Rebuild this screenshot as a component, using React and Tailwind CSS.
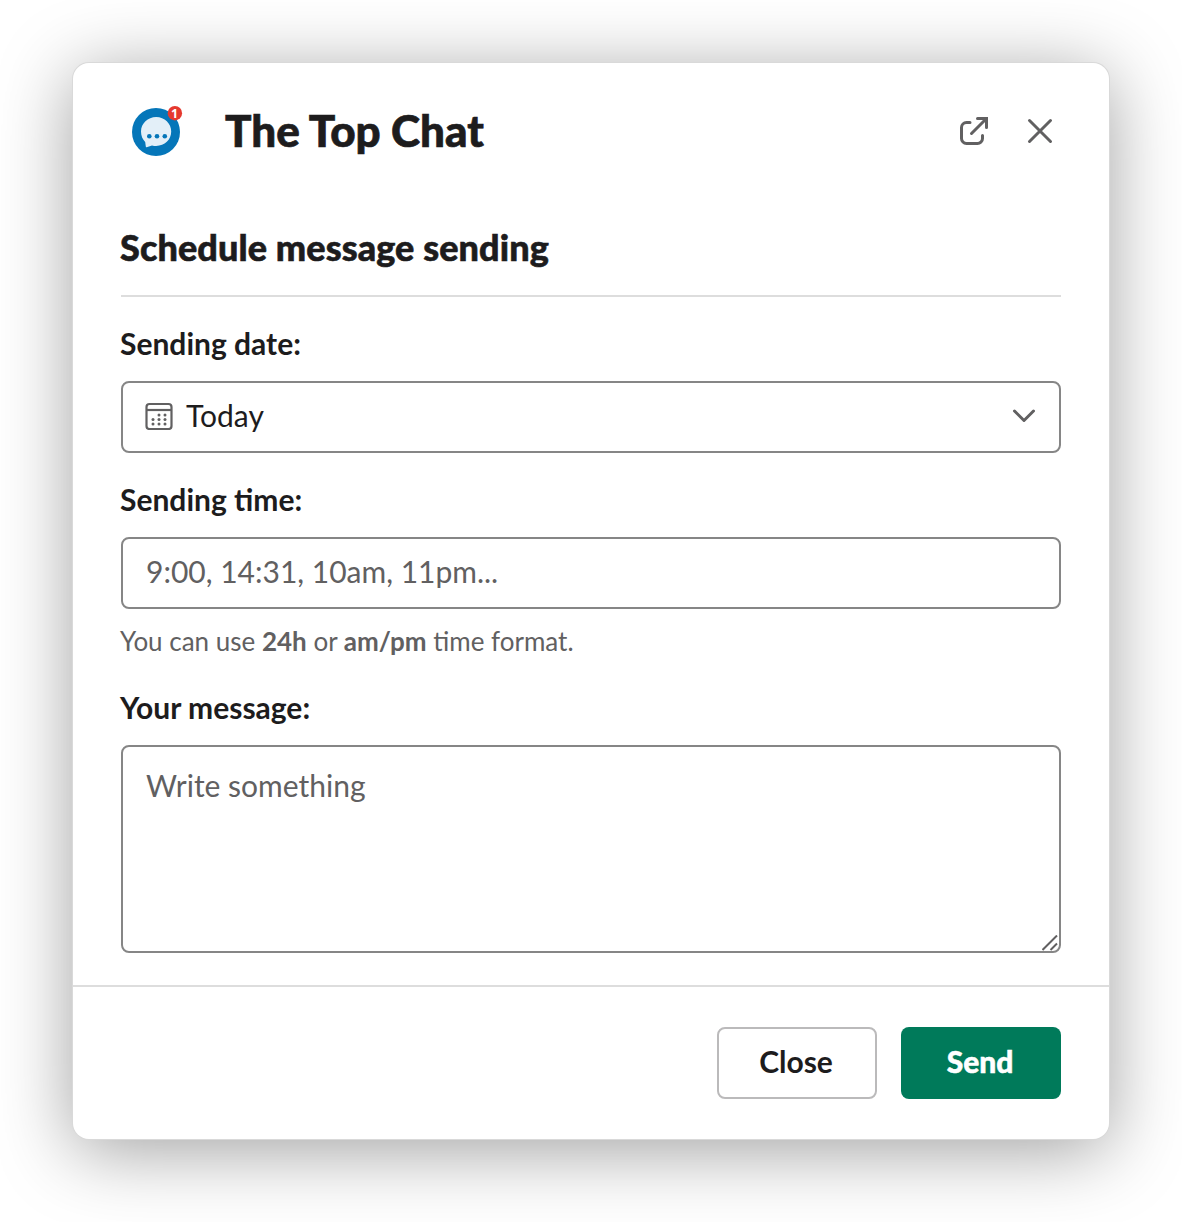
import React, { useState } from 'react';

const LogoIcon = () => (
  <svg width="52" height="52" viewBox="0 0 52 52" className="mb-0.5 shrink-0">
    <circle cx="25" cy="28" r="24" fill="#0576b9" />
    <path
      d="M25.2 13C33.6 13 40.2 19.4 40.2 27.6S33.6 42 25.2 42c-1.600 0-2.800-.2-4.200-.6l-5.300 1.800c-.6.1-.8-.1-.9-.6l-.6-4.600C11.600 35.600 10 31.800 10 27.600 10 19.400 16.800 13 25.200 13Z"
      fill="#e3eff8"
    />
    <circle cx="18.300" cy="32.200" r="2.300" fill="#0576b9" />
    <circle cx="26" cy="32.200" r="2.300" fill="#0576b9" />
    <circle cx="33.800" cy="32.200" r="2.300" fill="#0576b9" />
    <circle cx="43.900" cy="9.200" r="7.200" fill="#e5392f" />
    <text x="43.500" y="13.600" textAnchor="middle" fontFamily="Open Sans, sans-serif" fontSize="12.500" fontWeight="700" fill="#fff">1</text>
  </svg>
);

const OpenIcon = () => (
  <svg width="32" height="32" viewBox="0 0 32 32" fill="none" stroke="#616061" strokeWidth="3" strokeLinecap="round" strokeLinejoin="round">
    <path d="M12 7.500H8.500A5 5 0 0 0 3.500 12.500V23.500A5 5 0 0 0 8.500 28.500H19A5 5 0 0 0 24.500 23.500V20.500" />
    <path d="M13.500 18.500L27 5" />
    <path d="M19.500 3.500H28.500V12.500" strokeLinejoin="miter" />
  </svg>
);

const CloseIcon = () => (
  <svg width="28" height="28" viewBox="0 0 28 28" fill="none" stroke="#616061" strokeWidth="3" strokeLinecap="round">
    <path d="M3.500 3.500L24.500 24.500M24.500 3.500L3.500 24.500" />
  </svg>
);

const calendarDots = [
  [14, 13], [20, 13],
  [8, 17.500], [14, 17.500], [20, 17.500],
  [8, 22], [14, 22], [20, 22],
];

const CalendarIcon = () => (
  <svg width="28" height="28" viewBox="0 0 28 28" fill="none" stroke="#616061" strokeWidth="2.200">
    <rect x="1.500" y="2" width="25" height="25" rx="3" />
    <path d="M2 8H26" />
    {calendarDots.map(([x, y]) => (
      <circle key={`${x}-${y}`} cx={x} cy={y} r="1.500" fill="#616061" stroke="none" />
    ))}
  </svg>
);

const Label = ({ htmlFor, children }) => (
  <label htmlFor={htmlFor} className="-ml-px block pt-6 pb-4 text-[30px] leading-[44px] font-bold">
    {children}
  </label>
);

const App = () => {
  const [time, setTime] = useState('');
  const [message, setMessage] = useState('');

  return (
    <div className="flex h-[1222px] w-[1182px] items-start overflow-hidden bg-white px-[73px] pt-[63px] font-['Lato',sans-serif] text-[#1d1c1d]">
      <div className="w-[1036px] rounded-2xl bg-white shadow-[0_0_0_1px_#d9d9d9,0_11px_74px_rgba(0,0,0,0.38)]">
        <header className="flex h-[136px] items-center pr-[55px] pl-[58px]">
          <LogoIcon />
          <h1 className="mb-0.5 ml-[42px] flex-1 text-[44px] leading-[56px] font-black [-webkit-text-stroke:0.7px_#1d1c1d]">The Top Chat</h1>
          <button aria-label="Open in new window" className="mr-[36px]">
            <OpenIcon />
          </button>
          <button aria-label="Close dialog">
            <CloseIcon />
          </button>
        </header>

        <main className="px-12 pb-8">
          <h2 className="h-[98px] border-b-2 border-[#dddddd] -indent-px text-[36px] leading-[97px] font-black tracking-[0.1px] [-webkit-text-stroke:0.6px_#1d1c1d]">
            Schedule message sending
          </h2>

          <Label htmlFor="date">Sending date:</Label>
          <button id="date" className="flex h-[72px] w-full items-center rounded-lg border-2 border-[#868686] px-[22px] pb-0.5 text-left text-[30px]">
            <CalendarIcon />
            <span className="mb-0.5 ml-[13px] flex-1">Today</span>
            <svg width="26" height="26" viewBox="0 0 26 26" fill="none" stroke="#616061" strokeWidth="3" strokeLinecap="round" strokeLinejoin="round">
              <path d="M3.500 8L13 17.500L22.500 8" />
            </svg>
          </button>

          <Label htmlFor="time">Sending time:</Label>
          <input
            id="time"
            value={time}
            onChange={(e) => setTime(e.target.value)}
            placeholder="9:00, 14:31, 10am, 11pm..."
            className="block h-[72px] w-full rounded-lg border-2 border-[#868686] px-[23px] pb-1 text-[30px] outline-none placeholder:text-[#616061]"
          />
          <p className="-ml-px pt-[14px] pb-0.5 text-[26px] leading-9 text-[#616061]">
            You can use <b>24h</b> or <b>am/pm</b> time format.
          </p>

          <Label htmlFor="message">Your message:</Label>
          <div className="relative">
            <textarea
              id="message"
              value={message}
              onChange={(e) => setMessage(e.target.value)}
              placeholder="Write something"
              className="block h-[208px] w-full resize-none rounded-lg border-2 border-[#868686] px-[23px] py-4 text-[30px] leading-[44px] outline-none placeholder:text-[#616061]"
            />
            <svg width="16" height="16" viewBox="0 0 16 16" className="pointer-events-none absolute right-[3px] bottom-[2px]" stroke="#616061" strokeWidth="2">
              <path d="M.5 15L15 .5M8.500 15L15 8.500" />
            </svg>
          </div>
        </main>

        <footer className="flex justify-end gap-6 border-t-2 border-[#dddddd] px-12 py-10">
          <button className="h-[72px] w-40 rounded-lg border-2 border-[#bbbabb] pr-0.5 pb-1 text-[30px] font-bold">Close</button>
          <button className="h-[72px] w-40 rounded-lg bg-[#007a5a] pr-0.5 pb-1 text-[30px] font-black text-white [-webkit-text-stroke:0.5px_#fff]">Send</button>
        </footer>
      </div>
    </div>
  );
};

export default App;
